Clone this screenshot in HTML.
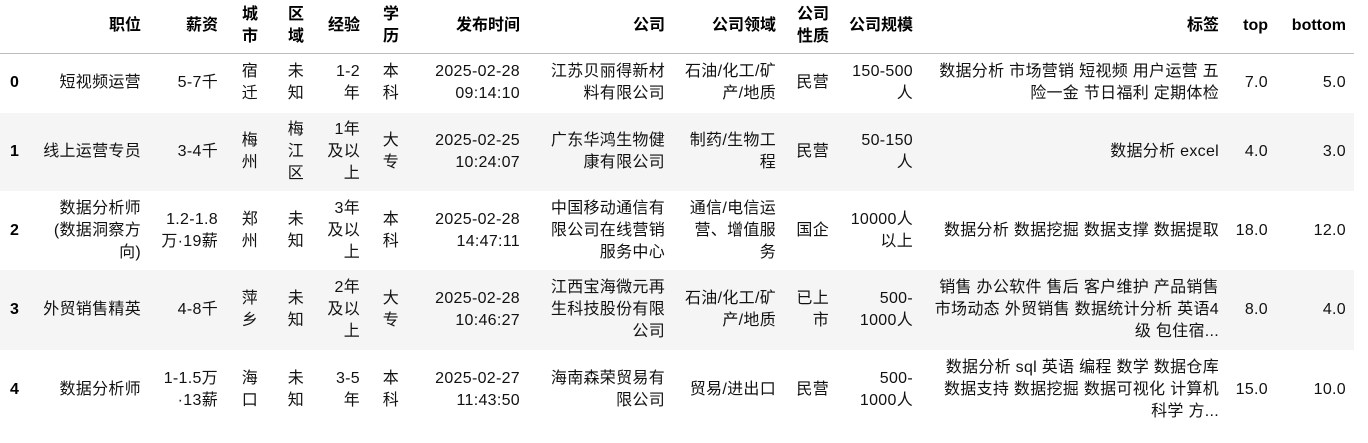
<!DOCTYPE html>
<html><head><meta charset="utf-8"><style>
body{margin:0;background:#fff;font-family:"Liberation Sans","Noto Sans CJK SC",sans-serif;font-size:16px;color:#111;}
table{border-collapse:collapse;table-layout:fixed;width:1354px;}
td,th{padding:0;text-align:right;vertical-align:middle;line-height:22px;white-space:nowrap;}
td{letter-spacing:0.3px}
th{font-weight:bold;color:#000}
thead tr{height:53px;border-bottom:1px solid #bdbdbd}
tbody th{text-align:left;padding-left:10px}
tr.s{background:#f5f5f5}
</style></head><body>
<table>
<colgroup><col style="width:30px"><col style="width:111px"><col style="width:77px"><col style="width:40px"><col style="width:46px"><col style="width:56px"><col style="width:39px"><col style="width:121px"><col style="width:145px"><col style="width:111px"><col style="width:53px"><col style="width:84px"><col style="width:306px"><col style="width:49px"><col style="width:78px"><col style="width:8px"></colgroup>
<thead><tr><th></th><th>职位</th><th>薪资</th><th>城<br>市</th><th>区<br>域</th><th>经验</th><th>学<br>历</th><th>发布时间</th><th>公司</th><th>公司领域</th><th>公司<br>性质</th><th>公司规模</th><th>标签</th><th>top</th><th>bottom</th><th></th></tr></thead>
<tbody>
<tr style="height:60px"><th>0</th><td>短视频运营</td><td>5-7千</td><td>宿<br>迁</td><td>未<br>知</td><td>1-2<br>年</td><td>本<br>科</td><td>2025-02-28<br>09:14:10</td><td>江苏贝丽得新材<br>料有限公司</td><td>石油/化工/矿<br>产/地质</td><td>民营</td><td>150-500<br>人</td><td>数据分析 市场营销 短视频 用户运营 五<br>险一金 节日福利 定期体检</td><td>7.0</td><td>5.0</td><td></td></tr>
<tr class="s" style="height:78px"><th>1</th><td>线上运营专员</td><td>3-4千</td><td>梅<br>州</td><td>梅<br>江<br>区</td><td>1年<br>及以<br>上</td><td>大<br>专</td><td>2025-02-25<br>10:24:07</td><td>广东华鸿生物健<br>康有限公司</td><td>制药/生物工<br>程</td><td>民营</td><td>50-150<br>人</td><td>数据分析 excel</td><td>4.0</td><td>3.0</td><td></td></tr>
<tr style="height:79px"><th>2</th><td>数据分析师<br>(数据洞察方<br>向)</td><td>1.2-1.8<br>万·19薪</td><td>郑<br>州</td><td>未<br>知</td><td>3年<br>及以<br>上</td><td>本<br>科</td><td>2025-02-28<br>14:47:11</td><td>中国移动通信有<br>限公司在线营销<br>服务中心</td><td>通信/电信运<br>营、增值服<br>务</td><td>国企</td><td>10000人<br>以上</td><td>数据分析 数据挖掘 数据支撑 数据提取</td><td>18.0</td><td>12.0</td><td></td></tr>
<tr class="s" style="height:80px"><th>3</th><td>外贸销售精英</td><td>4-8千</td><td>萍<br>乡</td><td>未<br>知</td><td>2年<br>及以<br>上</td><td>大<br>专</td><td>2025-02-28<br>10:46:27</td><td>江西宝海微元再<br>生科技股份有限<br>公司</td><td>石油/化工/矿<br>产/地质</td><td>已上<br>市</td><td>500-<br>1000人</td><td>销售 办公软件 售后 客户维护 产品销售<br>市场动态 外贸销售 数据统计分析 英语4<br>级 包住宿...</td><td>8.0</td><td>4.0</td><td></td></tr>
<tr style="height:79px"><th>4</th><td>数据分析师</td><td>1-1.5万<br>·13薪</td><td>海<br>口</td><td>未<br>知</td><td>3-5<br>年</td><td>本<br>科</td><td>2025-02-27<br>11:43:50</td><td>海南森荣贸易有<br>限公司</td><td>贸易/进出口</td><td>民营</td><td>500-<br>1000人</td><td>数据分析 sql 英语 编程 数学 数据仓库<br>数据支持 数据挖掘 数据可视化 计算机<br>科学 方...</td><td>15.0</td><td>10.0</td><td></td></tr>
</tbody></table>
</body></html>
